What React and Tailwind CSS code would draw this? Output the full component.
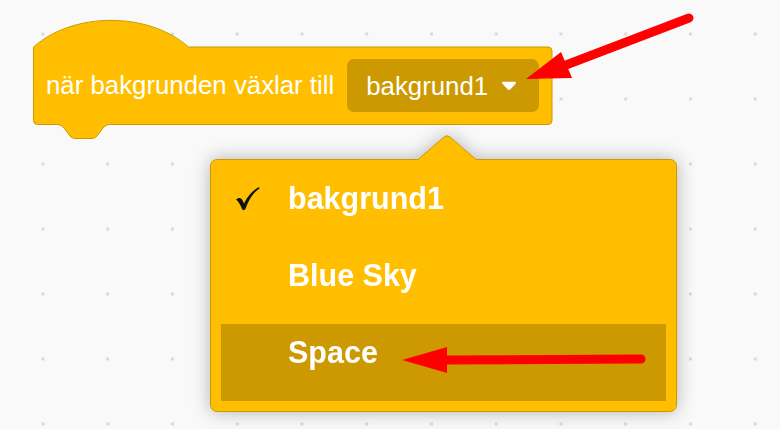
import React from 'react'

const FONT = { fontFamily: '"Liberation Sans", Arial, Helvetica, sans-serif' }

const HatBlock = () => (
  <div className="relative w-[520px] h-[120px] ml-[33px]">
    <svg className="absolute inset-0 overflow-visible" width="520" height="120" viewBox="0 0 520 120">
      <path
        d="M0.5,27 c40,-35.5 115,-35.5 155,0 H515 a4,4 0 0 1 4,4 V100.5 a4,4 0 0 1 -4,4 H77 c-3,0 -5,1.5 -7,3.5 l-6,8 c-1.5,1.5 -3,2.5 -5,2.5 H42 c-2,0 -3.5,-1 -5,-2.5 l-6,-8 c-2,-2 -4,-3.5 -7,-3.5 H4.5 a4,4 0 0 1 -4,-4 Z"
        fill="#ffbf00"
        stroke="#cc9900"
        strokeWidth="1"
      />
    </svg>
    <div className="relative flex items-center gap-[13px] pl-[13px] pt-[39px]">
      <span className="text-[25.8px] leading-[53px] text-white">när bakgrunden växlar till</span>
      <div className="flex items-center justify-between w-[192px] h-[53px] rounded-[7px] bg-[#cc9900] pl-[19px] pr-[22px]">
        <span className="text-[25.8px] leading-[30px] text-white">bakgrund1</span>
        <svg width="16" height="10" viewBox="0 0 16 10">
          <path d="M2,1.8 H14 L8.7,7.6 Q8,8.4 7.3,7.6 Z" fill="#fff" stroke="#fff" strokeWidth="2" strokeLinejoin="round" />
        </svg>
      </div>
    </div>
  </div>
)

const Check = () => (
  <svg width="24" height="24" viewBox="0 0 24 24">
    <path
      d="M0,12.5 C2,10.5 4.5,10.5 6,12.5 L8.2,16.5 C11,10 16,4 23,0 L23.5,1.5 C17,6 12.5,13 9.5,22 C8.5,23.5 6.5,23.5 6,22 C4.5,18 2.5,14.5 0,12.5 Z"
      fill="#111"
    />
  </svg>
)

const items = [
  { label: 'bakgrund1', checked: true },
  { label: 'Blue Sky' },
  { label: 'Space', active: true },
]

const Menu = () => (
  <div className="relative ml-[210px] mt-[19px] w-[467px] drop-shadow-[0_0_9px_rgba(0,0,0,0.28)]">
    <svg className="absolute left-[206px] top-[-24px]" width="62" height="26" viewBox="0 0 62 26">
      <path d="M2,25.5 L2,24.5 L28,2 Q31,-0.5 34,2 L60,24.5 L60,25.5 Z" fill="#ffbf00" />
      <path d="M2,24.5 L28,2 Q31,-0.5 34,2 L60,24.5" fill="none" stroke="#cc9900" strokeWidth="1" />
    </svg>
    <div className="h-[253px] rounded-[7px] border border-[#cc9900] bg-[#ffbf00] p-[10px]">
      {items.map((it) => (
        <div
          key={it.label}
          className={`relative flex h-[77px] items-start pl-[67px] pt-[13px] ${it.active ? 'bg-[#cc9900]' : ''}`}
        >
          {it.checked && (
            <div className="absolute left-[15px] top-[17px]">
              <Check />
            </div>
          )}
          <span className="text-[30.5px] font-bold leading-[30px] text-white">{it.label}</span>
        </div>
      ))}
    </div>
  </div>
)

const Arrows = () => (
  <svg className="absolute inset-0 pointer-events-none" width="780" height="429" viewBox="0 0 780 429">
    <line x1="566" y1="65" x2="689" y2="18" stroke="#ff0000" strokeWidth="9" strokeLinecap="round" />
    <polygon points="526,79 561,52 572,78" fill="#ff0000" />
    <line x1="445" y1="360" x2="641" y2="359" stroke="#ff0000" strokeWidth="9" strokeLinecap="round" />
    <polygon points="402,360 447,347 447,373" fill="#ff0000" />
  </svg>
)

export default function App() {
  return (
    <div
      className="relative h-[429px] w-[780px] overflow-hidden bg-[#f9f9f9] bg-[radial-gradient(circle,#dadada_1.4px,transparent_1.8px)] bg-[length:64.75px_65px] bg-[position:10.6px_1.5px] pt-[20px]"
      style={FONT}
    >
      <HatBlock />
      <Menu />
      <Arrows />
    </div>
  )
}
